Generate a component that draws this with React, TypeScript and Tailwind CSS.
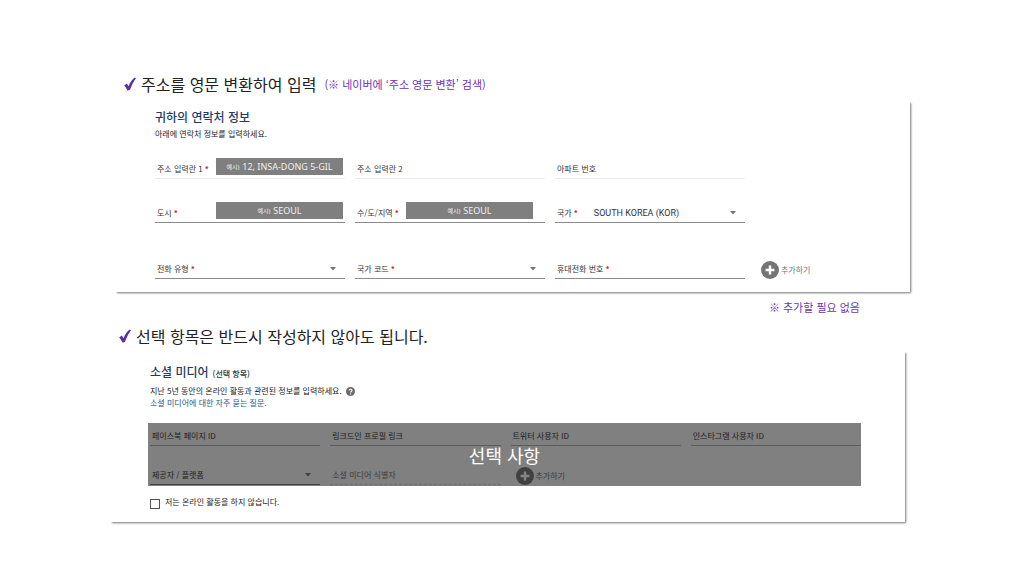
import type { ReactNode } from 'react';

function CheckMark() {
  return (
    <svg viewBox="0 0 12 14" className="h-[14px] w-3 shrink-0" fill="#5b2da8" aria-hidden="true">
      <path d="M0.2 8.4 L2.8 6.5 L4.5 9.2 C6 5.6 8 2.8 10.6 0.6 L12 1.2 C9.6 4.4 7.6 8.2 5.9 13 L3.4 13.4 C2.6 11.4 1.5 9.8 0.2 8.4Z" />
    </svg>
  );
}

function Caret({ className = 'text-[#757575]' }: { className?: string }) {
  return (
    <svg viewBox="0 0 6 4" className={`pointer-events-none mr-[9px] h-1 w-[6px] shrink-0 ${className}`} fill="currentColor" aria-hidden="true">
      <path d="M0 0h6L3 3.6z" />
    </svg>
  );
}

function AddButton({ dark = false }: { dark?: boolean }) {
  return (
    <button type="button" className="flex h-[18px] items-center gap-[2px] text-[8px] leading-3">
      <svg viewBox="0 0 18 18" className="size-[18px]" aria-hidden="true">
        <circle cx="9" cy="9" r="9" fill={dark ? '#404040' : '#757575'} />
        <path d="M9 4.6v8.8M4.6 9h8.8" stroke={dark ? '#858585' : '#ffffff'} strokeWidth="2.4" />
      </svg>
      <span className={dark ? 'text-[#3c3c3c]' : 'text-[#757575]'}>추가하기</span>
    </button>
  );
}

function Example({ value, className }: { value: string; className: string }) {
  return (
    <span className={`absolute top-[-1px] flex h-[17px] w-[127px] items-center justify-center gap-[3px] bg-[#7f7f7f] font-['Noto_Sans','Noto_Sans_CJK_KR',sans-serif] text-[#f0f0f0] ${className}`}>
      <span className="text-[6px] leading-3">예시)</span>
      <span className="text-[9px] leading-3">{value}</span>
    </span>
  );
}

type FieldProps = {
  id: string;
  label: string;
  required?: boolean;
  line?: string;
  labelColor?: string;
  options?: string[];
  caret?: string;
  children?: ReactNode;
};

function Field({ id, label, required, line = 'border-[#8a8a8a]', labelColor = 'text-[#333333]', options, caret, children }: FieldProps) {
  return (
    <div className={`relative flex h-5 min-w-0 items-center border-b pl-[2px] ${line}`}>
      <label htmlFor={id} className={`shrink-0 text-[8px] leading-3 ${labelColor}`}>
        {label}
        {required && <span className="ml-[2px] font-bold text-[#c62828]">*</span>}
      </label>
      {options ? (
        <>
          <select id={id} className="h-4 min-w-0 flex-1 appearance-none bg-transparent pl-4 font-[Roboto,sans-serif] text-[9px] leading-3 text-[#333333] outline-none">
            {options.map((option) => (
              <option key={option}>{option}</option>
            ))}
          </select>
          <Caret className={caret} />
        </>
      ) : (
        <input id={id} type="text" className="h-4 min-w-0 flex-1 bg-transparent px-1 text-[8px] outline-none" />
      )}
      {children}
    </div>
  );
}

const panel = 'bg-white shadow-[1px_1px_2px_rgba(0,0,0,0.55)] [clip-path:inset(0_-6px_-6px_0)]';
const contactRow = 'grid grid-cols-[1fr_1fr_1fr_155px] gap-[10px]';
const socialRow = 'grid grid-cols-4 gap-[10px]';

export default function App() {
  return (
    <main lang="ko" className="min-h-screen bg-white pt-[72px] pb-12 font-['Noto_Sans_CJK_KR',sans-serif] text-[#222222]">
      <section className="mr-[114px] ml-[116px]">
        <h1 className="flex h-6 items-center pl-2 text-[16px] leading-6">
          <CheckMark />
          <span className="ml-[5px]">주소를 영문 변환하여 입력</span>
          <span className="ml-2 text-[11px] text-[#6a35b5]">(※ 네이버에 ‘주소 영문 변환’ 검색)</span>
        </h1>

        <form className={`mt-[6px] pt-[7px] pb-[13px] pl-[39px] ${panel}`}>
          <h2 className="text-[12px] leading-4 font-medium text-[#1f3a63]">귀하의 연락처 정보</h2>
          <p className="mt-[3px] text-[8px] leading-3">아래에 연락처 정보를 입력하세요.</p>

          <div className={`mt-[19px] ${contactRow}`}>
            <Field id="address1" label="주소 입력란 1" required line="border-[#ececec]">
              <Example value="12, INSA-DONG 5-GIL" className="right-[2px]" />
            </Field>
            <Field id="address2" label="주소 입력란 2" line="border-[#ececec]" />
            <Field id="apartment" label="아파트 번호" line="border-[#ececec]" />
          </div>

          <div className={`mt-6 ${contactRow}`}>
            <Field id="city" label="도시" required>
              <Example value="SEOUL" className="right-[2px]" />
            </Field>
            <Field id="region" label="수/도/지역" required>
              <Example value="SEOUL" className="right-3" />
            </Field>
            <Field id="country" label="국가" required options={['SOUTH KOREA (KOR)']} />
          </div>

          <div className={`mt-9 ${contactRow}`}>
            <Field id="phone-type" label="전화 유형" required options={['']} />
            <Field id="country-code" label="국가 코드" required options={['']} />
            <Field id="phone" label="휴대전화 번호" required />
            <div className="flex items-end pl-[6px]">
              <AddButton />
            </div>
          </div>
        </form>

        <p className="mt-[6px] pr-[50px] text-right text-[11px] leading-[18px] text-[#6a35b5]">※ 추가할 필요 없음</p>
      </section>

      <section className="mt-2 mr-[119px] ml-[111px]">
        <h1 className="flex h-6 items-center pl-2 text-[16px] leading-6">
          <CheckMark />
          <span className="ml-[5px]">선택 항목은 반드시 작성하지 않아도 됩니다.</span>
        </h1>

        <form className={`mt-1 pt-3 pr-11 pb-3 pl-[37px] ${panel}`}>
          <h2 className="flex h-4 items-baseline gap-1 pl-[2px] text-[12px] leading-4 font-medium text-[#1f3a63]">
            소셜 미디어
            <span className="text-[8px] leading-3 text-[#333333]">(선택 항목)</span>
          </h2>
          <p className="mt-[5px] flex h-3 items-center gap-1 pl-[2px] text-[8px] leading-3">
            지난 5년 동안의 온라인 활동과 관련된 정보를 입력하세요.
            <svg viewBox="0 0 10 10" className="size-[9px]" aria-hidden="true">
              <circle cx="5" cy="5" r="5" fill="#6b6b6b" />
              <path d="M3.4 4 C3.4 1.9 6.7 1.9 6.7 3.9 C6.7 5 5.1 4.9 5.1 6.2" fill="none" stroke="#ffffff" strokeWidth="1.2" />
              <circle cx="5.1" cy="7.7" r="0.75" fill="#ffffff" />
            </svg>
          </p>
          <a href="#faq" className="block pl-[2px] text-[8px] leading-[11px] text-[#1b5a85]">
            소셜 미디어에 대한 자주 묻는 질문.
          </a>

          <div className="relative mt-[15px] bg-[#808080] pt-[3px] pb-px pl-[2px]">
            <div className={socialRow}>
              <Field id="facebook" label="페이스북 페이지 ID" labelColor="text-[#1c1c1c]" line="border-[#5c5c5c]" />
              <Field id="linkedin" label="링크드인 프로필 링크" labelColor="text-[#1c1c1c]" line="border-[#5c5c5c]" />
              <Field id="twitter" label="트위터 사용자 ID" labelColor="text-[#1c1c1c]" line="border-[#5c5c5c]" />
              <Field id="instagram" label="인스타그램 사용자 ID" labelColor="text-[#1c1c1c]" line="border-[#5c5c5c]" />
            </div>
            <div className={`mt-[19px] ${socialRow}`}>
              <Field id="provider" label="제공자 / 플랫폼" labelColor="text-[#1c1c1c]" line="border-[#404040]" options={['']} caret="text-[#404040]" />
              <Field id="identifier" label="소셜 미디어 식별자" labelColor="text-[#3c3c3c]" line="border-dashed border-[#6c6c6c]" />
              <div className="flex items-end pl-[5px]">
                <AddButton dark />
              </div>
            </div>
            <span className="pointer-events-none absolute inset-0 flex items-center justify-center text-[18px] leading-6 text-white">
              선택 사항
            </span>
          </div>

          <label className="mt-[10px] flex h-[14px] items-start gap-[5px] pl-[2px] text-[8px] leading-3">
            <input type="checkbox" className="mt-[3px] size-[10px] appearance-none border border-[#555555] bg-white checked:bg-[#555555]" />
            저는 온라인 활동을 하지 않습니다.
          </label>
        </form>
      </section>
    </main>
  );
}
